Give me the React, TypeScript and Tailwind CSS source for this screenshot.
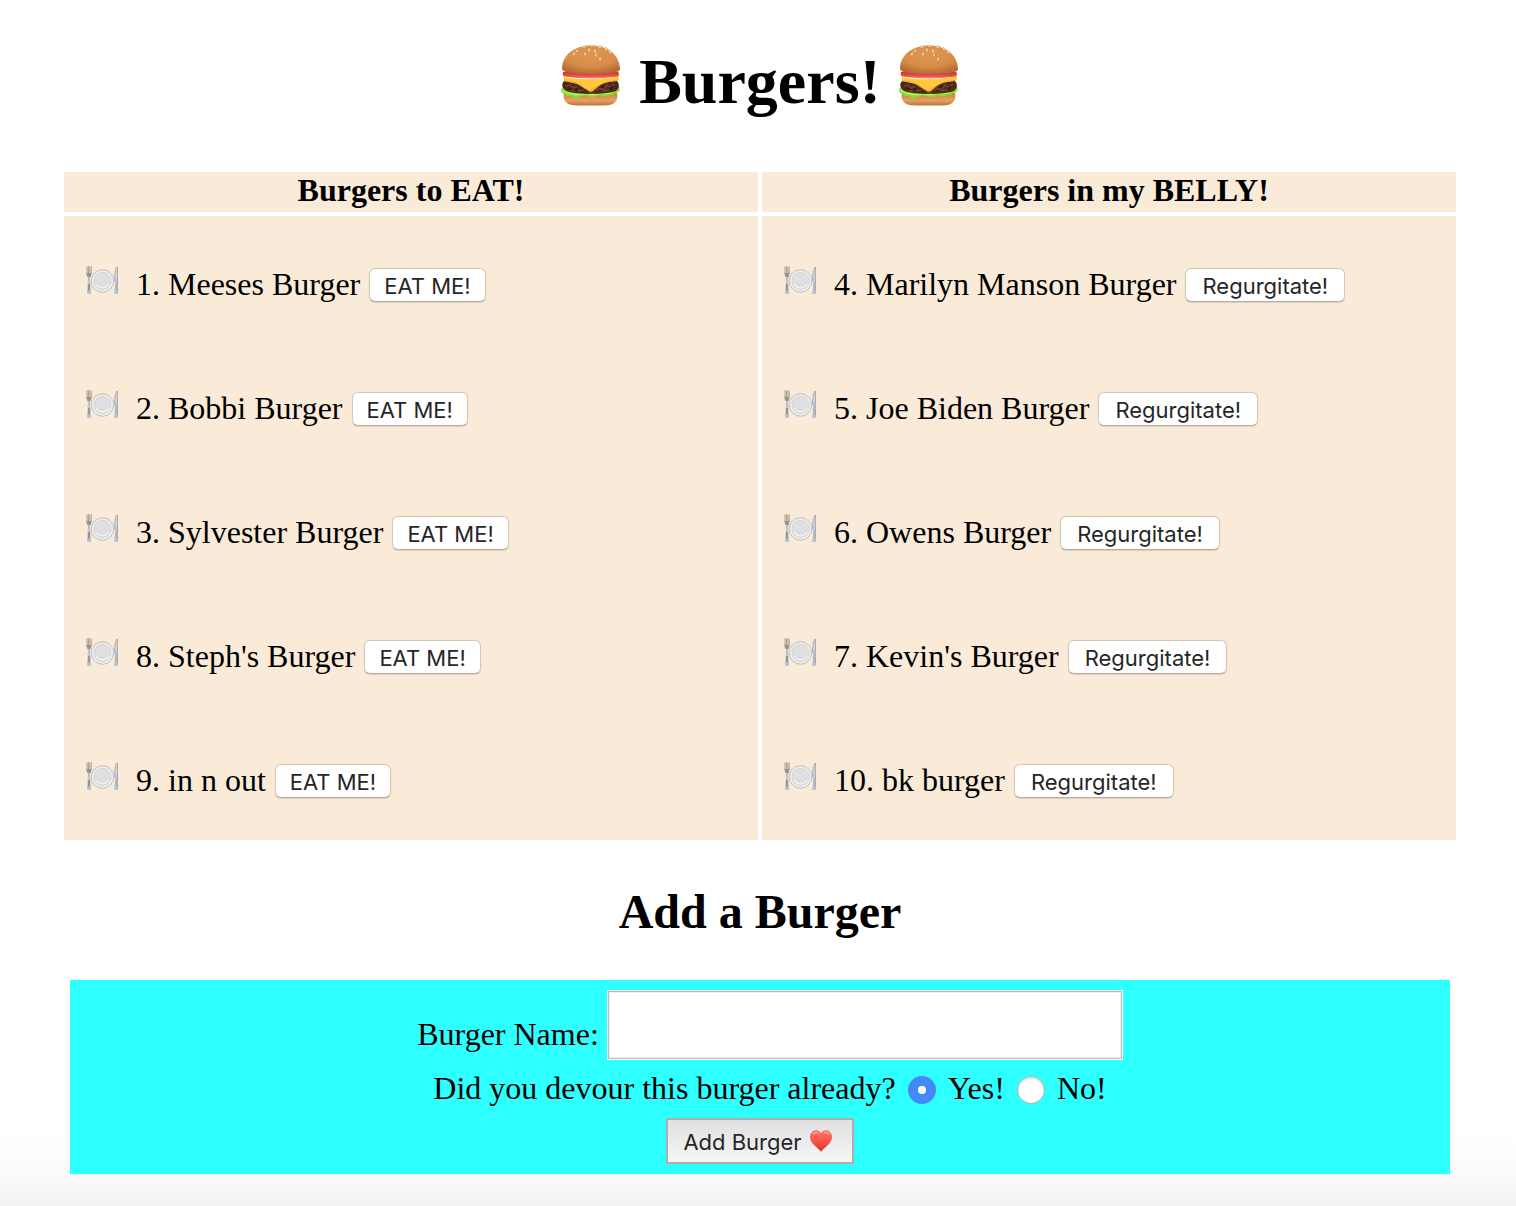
import React, { useState } from "react";

type Burger = { id: number; name: string };

const toEat: Burger[] = [
  { id: 1, name: "Meeses Burger" },
  { id: 2, name: "Bobbi Burger" },
  { id: 3, name: "Sylvester Burger" },
  { id: 8, name: "Steph's Burger" },
  { id: 9, name: "in n out" },
];

const eaten: Burger[] = [
  { id: 4, name: "Marilyn Manson Burger" },
  { id: 5, name: "Joe Biden Burger" },
  { id: 6, name: "Owens Burger" },
  { id: 7, name: "Kevin's Burger" },
  { id: 10, name: "bk burger" },
];

const seeds: [number, number, number][] = [
  [23, 2, 70], [34, 6, -20], [39, 2, 70], [16, 6, 50], [24, 9, 25], [28, 5, 10],
  [39, 14, 0], [49, 7, -40], [45, 4, -60], [13, 9, 40], [31, 1, 85], [35, 10, -10],
];

function BurgerIcon() {
  return (
    <svg viewBox="0 0 60 62" className="h-[62px] w-[60px]" aria-hidden="true">
      <defs>
        <radialGradient id="bun" cx="50%" cy="25%" r="75%">
          <stop offset="0" stopColor="#dd9750" />
          <stop offset="0.65" stopColor="#d78d49" />
          <stop offset="1" stopColor="#b56b33" />
        </radialGradient>
        <linearGradient id="base" x1="0" y1="0" x2="0" y2="1">
          <stop offset="0" stopColor="#c9813f" />
          <stop offset="0.6" stopColor="#e3a260" />
          <stop offset="1" stopColor="#bd7439" />
        </linearGradient>
        <linearGradient id="tomato" x1="0" y1="0" x2="0" y2="1">
          <stop offset="0" stopColor="#c93630" />
          <stop offset="0.6" stopColor="#e8504a" />
          <stop offset="1" stopColor="#f5857c" />
        </linearGradient>
      </defs>
      <path d="M3 48H56C58 56 53 60.500 43 60.500H16C6 60.500 1 56 3 48Z" fill="url(#base)" />
      <path d="M2 42C0 43 0 46 1 48C4 48 5 52 9 51C12 51 12 54 16 53C20 52 21 50 26 51C31 52 32 53 36 51C40 49 42 53 46 51C50 49 51 52 54 48C59 48 59 44 58 41Z" fill="#83dc2f" />
      <path d="M2 46C6 46 7 49 12 49C17 51 20 48 26 49C32 50 34 50 38 48C43 48 46 50 50 47L57 44" fill="none" stroke="#bdf263" strokeWidth="1.5" />
      <path d="M3 36H56C59 39 58 44 55 46C44 50 16 50 5 46C1 43 0 39 3 36Z" fill="#4a281a" />
      <path d="M5 41L9 40L12 43L15 42L18 46L23 45M35 46L38 43L42 45L46 40L49 42L54 39M8 45L14 46M28 48L34 48M43 46L50 44" fill="none" stroke="#794129" strokeWidth="1.5" />
      <path d="M8 43L10 45M15 45L17 43M41 43L43 41M49 45L51 41" stroke="#281611" strokeWidth="1.5" />
      <path d="M3 32C16 35 43 35 57 31C59 33 58 36 56 36C47 37 43 37 38 41L32 46Q29 48 26 45L18 40C13 37 8 38 4 36C2 35 2 33 3 32Z" fill="#ffc83d" />
      <path d="M3 36C11 36 17 38 22 42L29 46L37 41C43 37 50 36 56 35.500" fill="none" stroke="#e9a328" strokeWidth="1" />
      <path d="M2 27H57Q59 29 57 31.500Q30 35.500 3 31.500Q1 30 2 27Z" fill="url(#tomato)" />
      <path d="M1 23C2 9 14 0.500 30 0.500S58 9 59 23C60 27 55 27 49 28Q30 30 11 28C5 27 1 27 1 23Z" fill="url(#bun)" />
      {seeds.map(([x, y, a], i) => (
        <ellipse key={i} cx={x} cy={y} rx="1.1" ry="2" fill="#f7dda9" stroke="#b8763a" strokeWidth="0.4" transform={`rotate(${a} ${x} ${y})`} />
      ))}
    </svg>
  );
}

function PlateIcon() {
  return (
    <svg viewBox="0 0 32 29" className="h-[29px] w-8 shrink-0" aria-hidden="true">
      <circle cx="16.500" cy="15" r="11.300" fill="#ececed" stroke="#b9b5af" strokeWidth="0.8" />
      <circle cx="16.500" cy="15" r="8.500" fill="#dfdfe1" stroke="#cfd0d3" strokeWidth="0.8" />
      <path d="M10 18A7.500 7.500 0 0 0 23 18" fill="none" stroke="#f5f5f7" strokeWidth="1.4" />
      <path d="M0.500 7H5.500Q5.500 10 4 11.500L4.500 27.500H1.500L2 11.500Q0.500 10 0.500 7Z" fill="#9b948c" />
      <path d="M1 0.300V8M2.400 0.300V8M3.800 0.300V8M5.200 0.300V8" stroke="#a19587" strokeWidth="0.9" />
      <path d="M2.200 11H3.800L4.200 18H1.900Z" fill="#b9c6d5" />
      <path d="M1.300 24.500H4.700V28H1.300Z" fill="#abc4e3" />
      <path d="M31.500 0.500C29 1 28 7 28 15H29.300L28.500 28H31.700Z" fill="#b5b6b8" />
      <path d="M31 2V14H29.200Q28.800 6 31 2" fill="#cbd2da" />
      <path d="M31.500 1V27.500" stroke="#928d88" strokeWidth="0.5" />
      <path d="M28.500 12.500H31.200L30.900 17H28.800ZM28.500 24.500H31.400V28H28.300Z" fill="#adc8e9" />
    </svg>
  );
}

function HeartIcon() {
  return (
    <svg viewBox="0 0 22 22" className="h-[22px] w-[22px]" aria-hidden="true">
      <defs>
        <linearGradient id="heart" x1="0" y1="0" x2="0" y2="1">
          <stop offset="0" stopColor="#ff7565" />
          <stop offset="0.5" stopColor="#fa5548" />
          <stop offset="1" stopColor="#d92f28" />
        </linearGradient>
      </defs>
      <path d="M11 21.500C9 18 0.500 14 0.500 7C0.500 3 3 0.700 6 0.700C8.500 0.700 10.200 2 11 4C11.800 2 13.500 0.700 16 0.700C19 0.700 21.500 3 21.500 7C21.500 14 13 18 11 21.500Z" fill="url(#heart)" stroke="#d94139" strokeWidth="0.6" />
      <path d="M2.500 4.500Q5 1 8.500 3M13.500 3Q17 1 19.500 4.500" fill="none" stroke="#ffa18f" strokeWidth="1.3" />
    </svg>
  );
}

function BurgerList({ burgers, action, buttonPadding }: { burgers: Burger[]; action: string; buttonPadding: string }) {
  return (
    <ul className="flex flex-col gap-[88px] pt-[50px] pr-5 pb-[42px] pl-[22px]">
      {burgers.map((b) => (
        <li key={b.id} className="flex items-start leading-9">
          <PlateIcon />
          <span className="mr-[9px] ml-[18px]">{b.id}. {b.name}</span>
          <button
            type="button"
            className={`mt-0.5 h-[34px] rounded-md border border-[#d5c7b8] border-b-[#b9ada0] bg-white pt-0.5 font-[Inter,sans-serif] text-[22px] leading-[30px] text-[#262626] shadow-[0_1px_1px_rgba(0,0,0,0.12)] ${buttonPadding}`}
          >
            {action}
          </button>
        </li>
      ))}
    </ul>
  );
}

const radioClass =
  "mt-1 h-7 w-7 appearance-none rounded-full border border-[#a9b5b5] bg-white shadow-[inset_0_2px_2px_rgba(0,0,0,0.12)] checked:border-[10px] checked:border-[#4489f8] checked:shadow-none";

export default function App() {
  const [name, setName] = useState("");
  const [devoured, setDevoured] = useState(true);

  return (
    <main className="min-h-screen bg-[linear-gradient(to_top,#f1f1f1,#fbfbfb_32px,#ffffff_72px)] pr-14 pb-8 pl-[60px] font-['Liberation_Serif',serif] text-[32px] leading-9 text-black">
      <h1 className="flex items-start justify-center gap-[18px] pt-[45px] text-[64px] leading-[74px] font-bold">
        <BurgerIcon />
        <span>Burgers!</span>
        <BurgerIcon />
      </h1>

      <table className="mt-[49px] w-full table-fixed border-separate border-spacing-1">
        <thead>
          <tr className="h-10 bg-[#faebd9]">
            <th scope="col" className="px-0.5 pt-0 pb-1 font-bold">Burgers to EAT!</th>
            <th scope="col" className="px-0.5 pt-0 pb-1 font-bold">Burgers in my BELLY!</th>
          </tr>
        </thead>
        <tbody>
          <tr className="bg-[#faebd9] align-top">
            <td className="p-0"><BurgerList burgers={toEat} action="EAT ME!" buttonPadding="px-3.5" /></td>
            <td className="p-0"><BurgerList burgers={eaten} action="Regurgitate!" buttonPadding="px-4" /></td>
          </tr>
        </tbody>
      </table>

      <h2 className="mt-10 text-center text-[48px] leading-[56px] font-bold">Add a Burger</h2>

      <form
        className="mx-2.5 mt-10 flex flex-col items-center bg-[#2effff] py-2.5"
        onSubmit={(e) => e.preventDefault()}
      >
        <div className="flex items-end pl-5">
          <label htmlFor="burger-name" className="mr-2 mb-2">Burger Name:</label>
          <input
            id="burger-name"
            type="text"
            value={name}
            onChange={(e) => setName(e.target.value)}
            className="h-[70px] w-[516px] border border-white bg-white px-3 shadow-[inset_0_0_0_1px_#bcbcbc,inset_0_0_0_2px_#eeeeee] outline-none"
          />
        </div>
        <fieldset className="mt-2.5 flex items-center pl-5">
          <legend className="float-left mr-3">Did you devour this burger already?</legend>
          <input id="yes" type="radio" name="devoured" checked={devoured} onChange={() => setDevoured(true)} className={radioClass} />
          <label htmlFor="yes" className="mr-3 ml-3">Yes!</label>
          <input id="no" type="radio" name="devoured" checked={!devoured} onChange={() => setDevoured(false)} className={radioClass} />
          <label htmlFor="no" className="ml-3">No!</label>
        </fieldset>
        <button
          type="submit"
          className="mt-3 flex h-[46px] items-center gap-2 border-2 border-[#adadad] bg-linear-to-b from-[#e0e0e0] to-[#f6f6f6] pr-5 pl-[15px] font-[Inter,sans-serif] text-[22px] leading-7 text-[#262626]"
        >
          <span className="pt-0.5">Add Burger</span>
          <HeartIcon />
        </button>
      </form>
    </main>
  );
}
